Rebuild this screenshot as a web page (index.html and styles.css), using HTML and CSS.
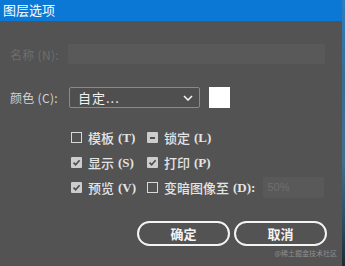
FILE: index.html
```html
<!DOCTYPE html>
<html lang="zh-CN">
<head>
    <meta charset="UTF-8">
    <title>图层选项</title>
    <link rel="stylesheet" href="styles.css">
</head>
<body>
    <div class="screen">
        <div class="dialog">
            <div class="titlebar">图层选项</div>

            <div class="content">
                <!-- 名称（禁用） -->
                <div class="row name-row">
                    <span class="label disabled">名称 (N):</span>
                    <div class="field name-field"></div>
                </div>

                <!-- 颜色 -->
                <div class="row color-row">
                    <span class="label">颜色 (C):</span>
                    <div class="select">
                        <span class="select-text">自定...</span>
                        <svg class="chevron" width="10" height="6" viewBox="0 0 10 6">
                            <path d="M1 1 L5 5 L9 1" fill="none" stroke="#f2f2f2" stroke-width="1.6"/>
                        </svg>
                    </div>
                    <div class="swatch"></div>
                </div>

                <!-- 选项 -->
                <div class="options">
                    <label class="opt"><span class="box"></span>模板 <span class="key">(T)</span></label>
                    <label class="opt"><span class="box mixed"></span>锁定 <span class="key">(L)</span></label>

                    <label class="opt"><span class="box checked"><svg width="11" height="11" viewBox="0 0 11 11"><path d="M2.5 5.6 L4.6 7.7 L8.6 3.2" fill="none" stroke="#4f4f4f" stroke-width="1.7"/></svg></span>显示 <span class="key">(S)</span></label>
                    <label class="opt"><span class="box checked"><svg width="11" height="11" viewBox="0 0 11 11"><path d="M2.5 5.6 L4.6 7.7 L8.6 3.2" fill="none" stroke="#4f4f4f" stroke-width="1.7"/></svg></span>打印 <span class="key">(P)</span></label>

                    <label class="opt"><span class="box checked"><svg width="11" height="11" viewBox="0 0 11 11"><path d="M2.5 5.6 L4.6 7.7 L8.6 3.2" fill="none" stroke="#4f4f4f" stroke-width="1.7"/></svg></span>预览 <span class="key">(V)</span></label>
                    <label class="opt"><span class="box"></span>变暗图像至 <span class="key">(D):</span><span class="field dim-field">50%</span></label>
                </div>

                <div class="buttons">
                    <button class="btn">确定</button>
                    <button class="btn">取消</button>
                </div>
            </div>

            <div class="watermark">@稀土掘金技术社区</div>
        </div>
        <div class="edge"></div>
    </div>
</body>
</html>
```

FILE: styles.css
```css
body {
    margin: 0;
    width: 345px;
    height: 266px;
    overflow: hidden;
    font-family: "Liberation Serif", "Noto Sans CJK SC", serif;
    font-size: 13px;
    color: #e6e6e6;
}
.screen {
    display: flex;
    height: 266px;
}
.dialog {
    position: relative;
    width: 342px;
    background: #535353;
}
.edge {
    flex: 1;
    background: linear-gradient(#2f7cbf 0, #3a6c8c 30%, #41708e 60%, #2c4a5e 85%, #1e2a33 100%);
}
.titlebar {
    height: 21px;
    line-height: 19px;
    padding-left: 3px;
    background: #0a78d4;
    color: #ffffff;
    font-family: "Noto Sans CJK SC", sans-serif;
    font-size: 13px;
}
.content {
    padding-top: 23px;
}
.row {
    display: flex;
    align-items: center;
}
.label {
    width: 58px;
    padding-left: 10px;
    font-family: "Noto Sans CJK SC", sans-serif;
    font-size: 12px;
    letter-spacing: 0.3px;
    color: #d4d4d4;
}
.label.disabled {
    color: #6e6e6e;
}
.field {
    background: #595959;
    border-radius: 2px;
}
.name-field {
    width: 257px;
    height: 20px;
}
.color-row {
    margin-top: 23px;
}
.select {
    display: flex;
    align-items: center;
    justify-content: space-between;
    box-sizing: border-box;
    width: 131px;
    height: 21px;
    margin-left: 1px;
    padding: 0 6px 0 8px;
    border: 1px solid #5b95cf;
    border-radius: 2px;
    background: #4f4f4f;
}
.select-text {
    font-family: "Noto Sans CJK SC", sans-serif;
    font-size: 13px;
    letter-spacing: 1px;
    color: #f2f2f2;
}
.chevron {
    margin-top: 1px;
}
.swatch {
    width: 21px;
    height: 21px;
    margin-left: 9px;
    background: #ffffff;
}
.options {
    display: grid;
    grid-template-columns: 76px auto;
    grid-auto-rows: 25px;
    margin-top: 17px;
    padding-left: 71px;
}
.opt {
    display: flex;
    align-items: center;
    font-size: 13px;
    font-weight: 500;
    color: #e4e4e4;
}
.key {
    margin-left: 4px;
    font-weight: bold;
}
.box {
    display: flex;
    align-items: center;
    justify-content: center;
    box-sizing: border-box;
    width: 11px;
    height: 11px;
    margin-right: 6px;
    border: 1px solid #d9d9d9;
}
.box.checked {
    border: none;
    border-radius: 1px;
    background: #cdcdcd;
}
.box.mixed {
    border: none;
    border-radius: 1px;
    background: #cdcdcd;
}
.box.mixed::after {
    content: "";
    width: 5px;
    height: 2px;
    background: #4f4f4f;
}
.dim-field {
    box-sizing: border-box;
    width: 61px;
    height: 21px;
    margin-left: 8px;
    padding-left: 4px;
    line-height: 21px;
    font-family: "Liberation Sans", sans-serif;
    font-size: 11px;
    font-weight: normal;
    color: #6f6f6f;
}
.buttons {
    display: flex;
    gap: 4px;
    margin-top: 21px;
    padding-left: 137px;
}
.btn {
    box-sizing: border-box;
    width: 93px;
    height: 25px;
    padding: 0;
    border: 2px solid #f4f4f4;
    border-radius: 13px;
    background: #535353;
    color: #f4f4f4;
    font-family: "Noto Sans CJK SC", sans-serif;
    font-size: 13px;
    font-weight: bold;
}
.watermark {
    position: absolute;
    right: 5px;
    bottom: 8px;
    font-family: "Noto Sans CJK SC", sans-serif;
    font-size: 7px;
    color: #8e8e8e;
}
```
